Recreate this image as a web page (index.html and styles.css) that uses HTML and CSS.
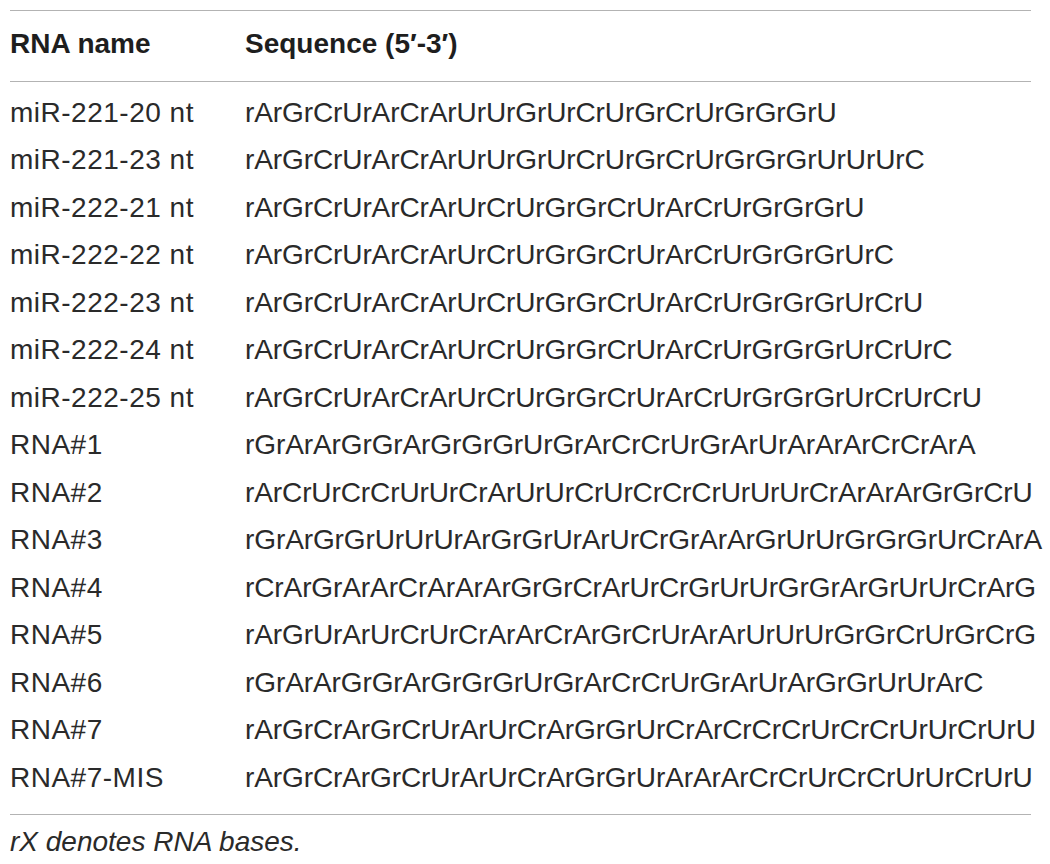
FILE: index.html
```html
<!DOCTYPE html>
<html>
<head>
<meta charset="utf-8">
<link rel="stylesheet" href="styles.css">
</head>
<body>
<div class="wrap">
<table class="seq-table">
<colgroup><col class="col-name"><col class="col-seq"></colgroup>
<thead>
<tr><th>RNA name</th><th>Sequence (5′-3′)</th></tr>
</thead>
<tbody>
<tr><td>miR-221-20 nt</td><td>rArGrCrUrArCrArUrUrGrUrCrUrGrCrUrGrGrGrU</td></tr>
<tr><td>miR-221-23 nt</td><td>rArGrCrUrArCrArUrUrGrUrCrUrGrCrUrGrGrGrUrUrUrC</td></tr>
<tr><td>miR-222-21 nt</td><td>rArGrCrUrArCrArUrCrUrGrGrCrUrArCrUrGrGrGrU</td></tr>
<tr><td>miR-222-22 nt</td><td>rArGrCrUrArCrArUrCrUrGrGrCrUrArCrUrGrGrGrUrC</td></tr>
<tr><td>miR-222-23 nt</td><td>rArGrCrUrArCrArUrCrUrGrGrCrUrArCrUrGrGrGrUrCrU</td></tr>
<tr><td>miR-222-24 nt</td><td>rArGrCrUrArCrArUrCrUrGrGrCrUrArCrUrGrGrGrUrCrUrC</td></tr>
<tr><td>miR-222-25 nt</td><td>rArGrCrUrArCrArUrCrUrGrGrCrUrArCrUrGrGrGrUrCrUrCrU</td></tr>
<tr><td>RNA#1</td><td>rGrArArGrGrArGrGrGrUrGrArCrCrUrGrArUrArArArCrCrArA</td></tr>
<tr><td>RNA#2</td><td>rArCrUrCrCrUrUrCrArUrUrCrUrCrCrCrUrUrUrCrArArArGrGrCrU</td></tr>
<tr><td>RNA#3</td><td>rGrArGrGrUrUrUrArGrGrUrArUrCrGrArArGrUrUrGrGrGrUrCrArA</td></tr>
<tr><td>RNA#4</td><td>rCrArGrArArCrArArArGrGrCrArUrCrGrUrUrGrGrArGrUrUrCrArG</td></tr>
<tr><td>RNA#5</td><td>rArGrUrArUrCrUrCrArArCrArGrCrUrArArUrUrUrGrGrCrUrGrCrG</td></tr>
<tr><td>RNA#6</td><td>rGrArArGrGrArGrGrGrUrGrArCrCrUrGrArUrArGrGrUrUrArC</td></tr>
<tr><td>RNA#7</td><td>rArGrCrArGrCrUrArUrCrArGrGrUrCrArCrCrCrUrCrCrUrUrCrUrU</td></tr>
<tr><td>RNA#7-MIS</td><td>rArGrCrArGrCrUrArUrCrArGrGrUrArArArCrCrUrCrCrUrUrCrUrU</td></tr>
</tbody>
</table>
<p class="note">rX denotes RNA bases.</p>
</div>
</body>
</html>
```
FILE: styles.css
```css
html, body {
  margin: 0;
  padding: 0;
  background: #ffffff;
}
body {
  font-family: "Liberation Sans", Arial, sans-serif;
  color: #2a2a2a;
}
.wrap {
  padding: 10px 0 0 10px;
  width: 1021px;
}
.seq-table {
  width: 1021px;
  table-layout: fixed;
  border-collapse: collapse;
  font-size: 28px;
  line-height: 47.5px;
}
.col-name {
  width: 235px;
}
.col-seq {
  width: 786px;
}
.seq-table th, .seq-table td {
  padding: 0;
  text-align: left;
  white-space: nowrap;
  vertical-align: top;
  overflow: visible;
}
.seq-table thead tr {
  border-top: 1px solid #b3b3b3;
  border-bottom: 1px solid #b3b3b3;
}
.seq-table th {
  font-weight: bold;
  color: #1e1e1e;
  padding-top: 9px;
  padding-bottom: 13px;
}
.seq-table td:first-child {
  letter-spacing: 0.5px;
}
.seq-table td:last-child {
  letter-spacing: -0.1px;
}
.seq-table tbody tr:first-child td {
  padding-top: 7px;
}
.seq-table tbody tr:last-child td {
  padding-bottom: 13px;
}
.seq-table tbody tr:last-child {
  border-bottom: 1px solid #b3b3b3;
}
.note {
  margin: 3px 0 0 0;
  font-size: 28px;
  line-height: 47.5px;
  font-style: italic;
  color: #2a2a2a;
}
```
